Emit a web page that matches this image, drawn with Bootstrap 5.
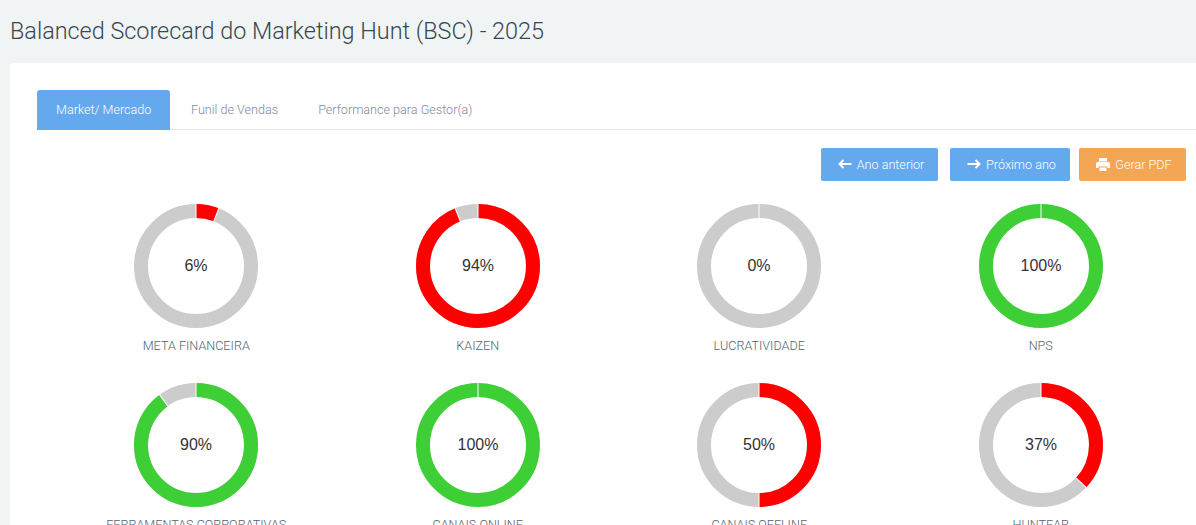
<!DOCTYPE html>
<html lang="pt">
<head>
<meta charset="utf-8">
<title>BSC</title>
<link href="https://cdn.jsdelivr.net/npm/bootstrap@5.3.0/dist/css/bootstrap.min.css" rel="stylesheet">
<style>
html,body{height:100%;overflow:hidden}
body{background:#f0f4f5;font-family:Roboto,"Liberation Sans",sans-serif;font-weight:300;color:#67757c}
.page-title{font-size:23.4px;font-weight:300;line-height:29px;color:#37474f;margin:0;padding:17px 10px 17px}
.sheet{margin-left:10px;background:#fff;border-radius:4px 0 0 0;padding-top:27px;height:462px;overflow:hidden}
.tab-bar{margin-left:27px;border-bottom:1px solid #e4e7ea;height:40px}
.tab-bar .nav-link{height:40px;border:0;border-radius:3px 3px 0 0;font-size:12.6px;line-height:39px;color:#7f899e;margin:0;background:none;padding:0 20px 0 21px}
.tab-bar .nav-link.active{background:#64a8ee;color:#fff;width:133px;padding:0 0 0 19px}
.tab-bar .nav-item:last-child .nav-link{padding:0 20px 0 20px}
.action-bar{padding:18px 10px 0 0;height:51px}
.act-btn{height:33px;border:0;border-radius:2px;font-size:12.6px;font-weight:300;color:#fff;padding:1px 0 0 3px;display:flex;align-items:center;justify-content:center;gap:5px}
.act-btn svg{margin-top:-2px}
.act-blue{background:#64a8ee}
.act-orange{background:#f3a654}
.w-prev{width:117px;margin-right:12px}
.w-next{width:120px;margin-right:9px}
.w-pdf{width:107px}
.act-btn:hover{color:#fff}
.kpi-grid{margin:0 14.500px 0 45.500px}
.kpi-cell{height:179px;text-align:center;padding:21.500px 0 0}
.kpi-cell svg{display:block;margin:0 auto}
.kpi-name{font-size:12.6px;line-height:16px;margin-top:9.500px;white-space:nowrap;color:#55636e}
.pct{font-family:"Liberation Sans",sans-serif;font-size:16px;fill:#333;text-anchor:middle;font-weight:400}
</style>
</head>
<body>
<h1 class="page-title">Balanced Scorecard do Marketing Hunt (BSC) - 2025</h1>
<div class="sheet">
  <ul class="nav tab-bar">
    <li class="nav-item"><a class="nav-link active" href="#">Market/ Mercado</a></li>
    <li class="nav-item"><a class="nav-link" href="#">Funil de Vendas</a></li>
    <li class="nav-item"><a class="nav-link" href="#">Performance para Gestor(a)</a></li>
  </ul>
  <div class="action-bar d-flex justify-content-end">
    <button class="btn act-btn act-blue w-prev" type="button"><svg width="14" height="10" viewBox="0 0 14 10"><path d="M13.500 5H2M5.500 1 1.500 5l4 4" fill="none" stroke="#fff" stroke-width="2"/></svg>Ano anterior</button>
    <button class="btn act-btn act-blue w-next" type="button"><svg width="14" height="10" viewBox="0 0 14 10"><path d="M.5 5h11M8.500 1l4 4-4 4" fill="none" stroke="#fff" stroke-width="2"/></svg>Próximo ano</button>
    <button class="btn act-btn act-orange w-pdf" type="button"><svg width="14" height="13" viewBox="0 0 14 13"><path fill="#fff" d="M3 0h8v3.500H3zM1.500 4h11A1.500 1.500 0 0 1 14 5.500V10h-2.500V8.500h-9V10H0V5.500A1.500 1.500 0 0 1 1.500 4zM3.500 9.500h7V13h-7z"/></svg>Gerar PDF</button>
  </div>
  <div class="row g-0 kpi-grid">
    <div class="col-3 kpi-cell">
      <svg width="126" height="126" viewBox="0 0 126 126"><circle cx="63" cy="63" r="55" fill="none" stroke="#cccccc" stroke-width="14"/><circle cx="63" cy="63" r="55" fill="none" stroke="#ff0000" stroke-width="14" pathLength="100" stroke-dasharray="6 94" transform="rotate(-90 63 63)"/><line x1="63" y1="0" x2="63" y2="15" stroke="#fff"/><line x1="63" y1="0" x2="63" y2="15" stroke="#fff" transform="rotate(21.600 63 63)"/><text class="pct" x="63" y="68">6%</text></svg>
      <div class="kpi-name">META FINANCEIRA</div>
    </div>
    <div class="col-3 kpi-cell">
      <svg width="126" height="126" viewBox="0 0 126 126"><circle cx="63" cy="63" r="55" fill="none" stroke="#cccccc" stroke-width="14"/><circle cx="63" cy="63" r="55" fill="none" stroke="#ff0000" stroke-width="14" pathLength="100" stroke-dasharray="94 6" transform="rotate(-90 63 63)"/><line x1="63" y1="0" x2="63" y2="15" stroke="#fff"/><line x1="63" y1="0" x2="63" y2="15" stroke="#fff" transform="rotate(338.400 63 63)"/><text class="pct" x="63" y="68">94%</text></svg>
      <div class="kpi-name">KAIZEN</div>
    </div>
    <div class="col-3 kpi-cell">
      <svg width="126" height="126" viewBox="0 0 126 126"><circle cx="63" cy="63" r="55" fill="none" stroke="#cccccc" stroke-width="14"/><line x1="63" y1="0" x2="63" y2="15" stroke="#fff"/><text class="pct" x="63" y="68">0%</text></svg>
      <div class="kpi-name">LUCRATIVIDADE</div>
    </div>
    <div class="col-3 kpi-cell">
      <svg width="126" height="126" viewBox="0 0 126 126"><circle cx="63" cy="63" r="55" fill="none" stroke="#3ecf36" stroke-width="14"/><line x1="63" y1="0" x2="63" y2="15" stroke="#fff"/><text class="pct" x="63" y="68">100%</text></svg>
      <div class="kpi-name">NPS</div>
    </div>
    <div class="col-3 kpi-cell">
      <svg width="126" height="126" viewBox="0 0 126 126"><circle cx="63" cy="63" r="55" fill="none" stroke="#cccccc" stroke-width="14"/><circle cx="63" cy="63" r="55" fill="none" stroke="#3ecf36" stroke-width="14" pathLength="100" stroke-dasharray="90 10" transform="rotate(-90 63 63)"/><line x1="63" y1="0" x2="63" y2="15" stroke="#fff"/><line x1="63" y1="0" x2="63" y2="15" stroke="#fff" transform="rotate(324 63 63)"/><text class="pct" x="63" y="68">90%</text></svg>
      <div class="kpi-name">FERRAMENTAS CORPORATIVAS</div>
    </div>
    <div class="col-3 kpi-cell">
      <svg width="126" height="126" viewBox="0 0 126 126"><circle cx="63" cy="63" r="55" fill="none" stroke="#3ecf36" stroke-width="14"/><line x1="63" y1="0" x2="63" y2="15" stroke="#fff"/><text class="pct" x="63" y="68">100%</text></svg>
      <div class="kpi-name">CANAIS ONLINE</div>
    </div>
    <div class="col-3 kpi-cell">
      <svg width="126" height="126" viewBox="0 0 126 126"><circle cx="63" cy="63" r="55" fill="none" stroke="#cccccc" stroke-width="14"/><circle cx="63" cy="63" r="55" fill="none" stroke="#ff0000" stroke-width="14" pathLength="100" stroke-dasharray="50 50" transform="rotate(-90 63 63)"/><line x1="63" y1="0" x2="63" y2="15" stroke="#fff"/><line x1="63" y1="0" x2="63" y2="15" stroke="#fff" transform="rotate(180 63 63)"/><text class="pct" x="63" y="68">50%</text></svg>
      <div class="kpi-name">CANAIS OFFLINE</div>
    </div>
    <div class="col-3 kpi-cell">
      <svg width="126" height="126" viewBox="0 0 126 126"><circle cx="63" cy="63" r="55" fill="none" stroke="#cccccc" stroke-width="14"/><circle cx="63" cy="63" r="55" fill="none" stroke="#ff0000" stroke-width="14" pathLength="100" stroke-dasharray="37 63" transform="rotate(-90 63 63)"/><line x1="63" y1="0" x2="63" y2="15" stroke="#fff"/><line x1="63" y1="0" x2="63" y2="15" stroke="#fff" transform="rotate(133.200 63 63)"/><text class="pct" x="63" y="68">37%</text></svg>
      <div class="kpi-name">HUNTEAR</div>
    </div>
  </div>
</div>
<script src="https://cdn.jsdelivr.net/npm/bootstrap@5.3.0/dist/js/bootstrap.bundle.min.js"></script>
</body>
</html>
